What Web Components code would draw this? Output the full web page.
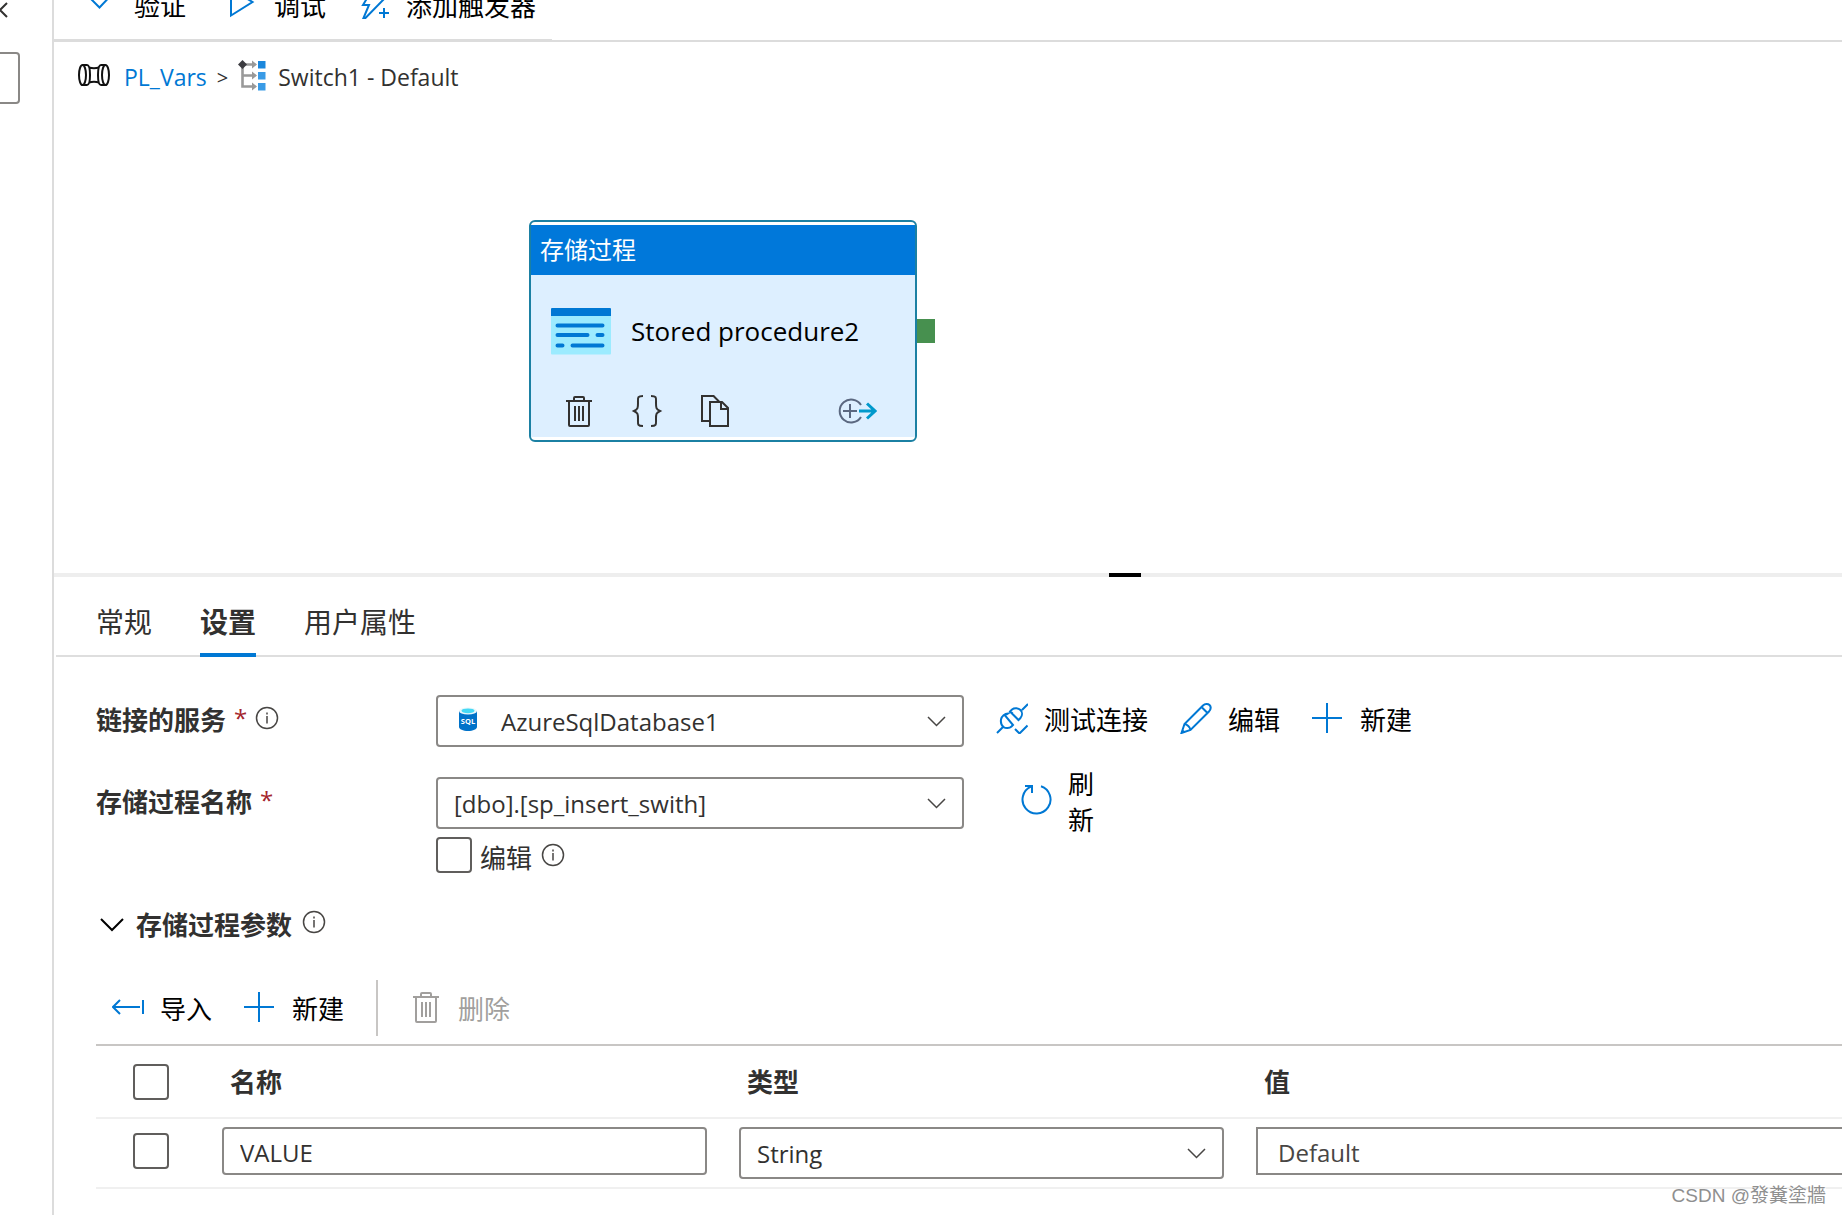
<!DOCTYPE html>
<html lang="zh-CN">
<head>
<meta charset="utf-8">
<title>PL_Vars</title>
<style>
html,body{margin:0;height:100%}
body{font-family:"Open Sans","Noto Sans CJK SC",sans-serif;font-size:26px;line-height:36px;color:#323130;background:#fff;overflow:hidden}
</style>
</head>
<body>
<studio-app></studio-app>
<script>
const ICONS = {
  check: ['0 0 32 32', '<path d="M5 11l8.500 8.500L22.500 10" stroke="#0078d4"/>'],
  play: ['0 0 32 32', '<path d="M5 1v26.500L26.500 14z" stroke="#0078d4"/>'],
  bolt: ['0 0 32 32', '<path d="M14 2L5 17h6L5.500 30h2L27 10h-8l4-8zM26 20v10M21 25h10" stroke="#0078d4"/>'],
  test: ['0 0 32 32', '<path d="M1 31l6-6M26 8l6-6M12 11.500c-3 0-6.500 2.500-7 6s.500 6 2.500 7.500 6 1.500 8-.500l1.500-1.500L9 13.500zM14 9.500l8.500 8.500 2-2c2-2.500 2-6 0-8s-6-2.500-8.500-.500zM17 12l-1.500-1.500M19 27l4.500 4.500 8-8" stroke="#0078d4"/>'],
  pencil: ['0 0 32 32', '<path d="M1.500 31l3-9L23 3.500c2-2 5-2 6.500-.500s1.500 4-.500 6.500L10.500 28zM4.500 22c2.500.500 5.500 3 6 6M21.500 5l6.500 6.500M2 28l2.500 2.500" stroke="#0078d4"/>'],
  plus: ['0 0 32 32', '<path d="M0 16h30M15 1v30" stroke="#0078d4"/>'],
  refresh: ['0 0 32 32', '<path d="M21 2.200A14 14 0 1 1 11 2.600M5 2h7v7" stroke="#0078d4"/>'],
  import: ['0 0 32 32', '<path d="M28 16H1M8 9l-7 7 7 7M31 9v14" stroke="#0078d4"/>'],
  trash: ['0 0 32 32', '<path d="M3 6h26M11 6V3q0-1 1-1h8q1 0 1 1v3M6 6v24q0 1 1 1h18q1 0 1-1V6M12 11v15M16 11v15M20 11v15" stroke="currentColor"/>'],
  braces: ['0 0 32 32', '<path d="M12 1C6 1 7 3 7 8s0 6-4 8c4 2 4 3 4 8s-1 7 5 7M20 1c6 0 5 2 5 7s0 6 4 8c-4 2-4 3-4 8s1 7-5 7" stroke="currentColor"/>'],
  copy: ['0 0 32 32', '<path d="M11 26H3V1h11.500l5 5M11 7h12l6 6v18H11zM22 7v7h7M14.500 1l6 6" stroke="currentColor"/>'],
  next: ['0 0 40 32', '<path d="M24 10A11.500 11.500 0 1 0 24 22M13 9v14M6 16h14" stroke="#5b6880"/><path d="M22 16h15M30 8.500l8 7.500-8 7.500" stroke="#0099cc" stroke-width="3"/>'],
  info: ['0 0 24 24', '<circle cx="12" cy="12" r="10.500" stroke="#484644" stroke-width="1.500"/><path d="M12 10v7.500M12 6.500v2" stroke="#484644" stroke-width="1.500"/>'],
  chevron: ['0 0 24 24', '<path d="M4 8l8.500 8.500L21 8" stroke="currentColor" stroke-width="1.500"/>'],
  section: ['0 0 24 24', '<path d="M1 6l11 11L23 6" stroke="#000"/>'],
  back: ['0 0 16 24', '<path d="M7 3L0 10l7 7" stroke="#323130"/>'],
  pipeline: ['0 0 32 24', '<g stroke="#111"><ellipse cx="4.500" cy="11" rx="3.500" ry="10"/><path d="M4.500 1H9c2 0 3 4 3 10s-1 10-3 10H4.500M11 3.500q5 1.500 10 0M11 18.500q5-1.500 10 0"/><path d="M27.500 1H23c-2 0-3 4-3 10s1 10 3 10h4.500"/><ellipse cx="27.500" cy="11" rx="3.500" ry="10"/></g>'],
  switch: ['0 0 28 32', '<path d="M4.500 5v21.500H15M4.500 15.500H15M4.500 4.500H15" stroke="#999" stroke-width="2.600"/><path d="M14 .500l5 4-5 4zM14 11.500l5 4-5 4zM14 22.500l5 4-5 4z" fill="#999"/><path d="M4.500 0L9 4.500 4.500 9 0 4.500z" fill="#3c3c41"/><path d="M20 1h7.500v7.500H20z" fill="#1b87dc"/><path d="M20 12h7.500v7.500H20zM20 23h7.500v7.500H20z" fill="#3a9be6"/>'],
  procedure: ['0 0 60 48', '<path d="M0 8h60v38.500q0 1-1 1H1q-1 0-1-1z" fill="#9cebff"/><path d="M0 9V2q0-1 1-1h58q1 0 1 1v7z" fill="#0078d4"/><path d="M6.500 18.500h45M6.500 28h30M46.500 28h5M6.500 38.500h5M21.500 38.500h30" stroke="#0078d4" stroke-width="4" stroke-linecap="round"/>'],
  sql: ['0 0 18 24', '<path d="M0 4v16c0 2 4 4 9 4s9-2 9-4V4z" fill="#0072c9"/><ellipse cx="9" cy="4" rx="9" ry="3.600" fill="#e8f7fb"/><ellipse cx="9" cy="3.800" rx="6.500" ry="2.400" fill="#45d9f5"/><text x="9" y="16.500" text-anchor="middle" font-family="Open Sans,sans-serif" font-weight="700" font-size="7.500" fill="#fff">SQL</text>']
};
const define = (tag, css, html) => customElements.define(tag, class extends HTMLElement {
  constructor() {
    super();
    this.attachShadow({ mode: 'open' });
  }
  connectedCallback() {
    this.shadowRoot.innerHTML = `<style>*{box-sizing:border-box}${css}</style>${typeof html === 'function' ? html(this) : html}`;
  }
});
const attr = (el, name, fallback = '') => el.getAttribute(name) ?? fallback;

define('ui-icon', ':host{display:inline-flex;flex:none}svg{display:block;fill:none;stroke-width:2}', el => {
  const [box, art] = ICONS[attr(el, 'name')];
  const [, , w, h] = box.split(' ');
  return `<svg viewBox="${box}" width="${w}" height="${h}" aria-hidden="true">${art}</svg>`;
});

define('tool-button', `:host{display:flex}
button{display:flex;align-items:center;gap:16px;padding:0;border:0;background:none;font:inherit;color:#000;text-align:left}
button:disabled{color:#a19f9d}
span{padding-top:4px}
:host([narrow]) span{width:26px}`,
el => `<button type="button" ${el.hasAttribute('disabled') ? 'disabled' : ''}><ui-icon name="${attr(el, 'icon')}"></ui-icon><span><slot></slot></span></button>`);

define('info-tip', ':host{display:inline-flex}button{display:flex;padding:0;border:0;background:none}',
  '<button type="button" aria-label="info"><ui-icon name="info"></ui-icon></button>');

const CHECK = 'input[type=checkbox]{appearance:none;display:block;flex:none;width:36px;height:36px;margin:0;border:2px solid #605e5c;border-radius:4px;background:#fff}';
const SELECT = `.pick{display:grid;align-items:center}
.pick>*{grid-area:1/1}
select{appearance:none;width:100%;height:52px;margin:0;padding:2px 56px 0 16px;border:2px solid #8a8886;border-radius:4px;background:#fff;font:inherit;font-size:24px;color:#323130}
.arrow{justify-self:end;margin-right:16px;color:#484644;pointer-events:none}`;

define('side-rail', `:host{display:flex;flex-direction:column;align-items:flex-start;width:54px;flex:none;border-right:2px solid #dcdcdc}
button{padding:0;border:0;background:none;margin-bottom:28px}
button,ui-icon{display:block}
input{width:20px;height:52px;padding:0;border:2px solid #8a8886;border-left:0;border-radius:0 4px 4px 0}`,
'<button type="button" aria-label="back"><ui-icon name="back"></ui-icon></button><input type="text" aria-label="filter">');

define('command-bar', `:host{display:block;height:42px;overflow:hidden;border-bottom:2px solid #dcdcdc}
nav{display:flex;width:fit-content;gap:32px;height:55px;margin-top:-15px;padding:0 16px 16px 32px;border-bottom:1px solid #dcdcdc}
.first{padding-right:8px}`,
`<nav><tool-button class="first" icon="check">验证</tool-button><tool-button icon="play">调试</tool-button><tool-button icon="bolt">添加触发器</tool-button></nav>`);

define('crumb-trail', `:host{display:flex;align-items:center;gap:10px;padding:16px 24px;font-size:23px}
a{color:#0078d4;text-decoration:none}
.sep{font-size:20px;padding-top:2px}
.crumb{display:flex;align-items:center;gap:12px}
a.crumb{gap:14px}
a ui-icon,.crumb ui-icon{padding-bottom:2px}`,
`<a class="crumb" href="#pipeline"><ui-icon name="pipeline"></ui-icon><span>PL_Vars</span></a><span class="sep">&gt;</span><span class="crumb"><ui-icon name="switch"></ui-icon><span>Switch1 - Default</span></span>`);

define('activity-node', `:host{display:block;position:relative;width:388px;padding:3px 0 3px;border:2px solid #1b80a3;border-radius:6px;background:#fff}
header{padding:7px 9px 7px;background:#0078da;color:#fff;font-size:24px}
.body{background:#ddefff;padding:32px 20px 10px}
.title{display:flex;align-items:center;gap:20px;font-size:26px;color:#000}
.acts{display:flex;gap:36px;margin-top:40px;padding:0 18px 0 12px;color:#323130}
button{display:flex;padding:0;border:0;background:none;color:inherit}
.last{margin-left:auto}
.port{position:absolute;left:100%;top:97px;width:18px;height:24px;background:#47904f;margin-left:2px}`,
`<header><slot name="type"></slot></header><div class="body"><div class="title"><ui-icon name="procedure"></ui-icon><slot></slot></div>
<div class="acts"><button type="button" aria-label="delete"><ui-icon name="trash"></ui-icon></button><button type="button" aria-label="code"><ui-icon name="braces"></ui-icon></button><button type="button" aria-label="copy"><ui-icon name="copy"></ui-icon></button><button type="button" class="last" aria-label="add output"><ui-icon name="next"></ui-icon></button></div></div><div class="port"></div>`);

define('pipeline-canvas', ':host{display:block;position:relative;height:531px}activity-node{position:absolute;left:475px;top:178px}',
'<crumb-trail></crumb-trail><activity-node><span slot="type">存储过程</span><span>Stored procedure2</span></activity-node>');

define('pane-splitter', ':host{display:flex;justify-content:center;height:4px;background:#eee}i{width:32px;background:#000;margin-left:354px}', '<i></i>');
define('tab-strip', `:host{display:flex;gap:48px;margin-left:2px;padding-left:40px;border-bottom:2px solid #dedede;font-size:28px}
button{margin:0 0 -2px;padding:27px 0 13px;border:0;border-bottom:4px solid transparent;background:none;font:inherit;color:inherit}
[aria-selected=true]{border-color:#0078d4;font-weight:700}`,
`<button type="button" role="tab" aria-selected="false">常规</button><button type="button" role="tab" aria-selected="true">设置</button><button type="button" role="tab" aria-selected="false">用户属性</button>`);

define('field-row', `:host{display:flex;align-items:flex-start}
.name{display:flex;align-items:center;width:340px;height:50px;flex:none;font-weight:700}
b{margin:0 8px 0 8px;color:#a4262c;font-weight:400;font-size:24px}
.name info-tip,.name b{margin-bottom:4px}
.control{width:528px;flex:none}
.lead{justify-self:start;margin-left:23px;margin-bottom:4px;pointer-events:none}
${SELECT}
.with-icon select{padding-left:63px}`,
el => `<div class="name"><label for="s">${attr(el, 'label')}</label><b>*</b>${el.hasAttribute('info') ? '<info-tip></info-tip>' : ''}</div>
<div class="control"><div class="pick ${attr(el, 'icon') ? 'with-icon' : ''}"><select id="s"><option>${attr(el, 'value')}</option></select>${attr(el, 'icon') ? `<ui-icon class="lead" name="${attr(el, 'icon')}"></ui-icon>` : ''}<ui-icon class="arrow" name="chevron"></ui-icon></div><slot></slot></div><slot name="actions"></slot>`);

define('check-field', `:host{display:flex;align-items:center;gap:8px;height:36px;margin-top:8px}label{padding-top:6px}info-tip{margin:0 0 0 1px}${CHECK}`,
'<input type="checkbox" id="c"><label for="c"><slot></slot></label><info-tip></info-tip>');

define('settings-form', `:host{display:flex;flex-direction:column;gap:30px;padding:38px 0 0 42px}
.actions{display:flex;gap:32px;margin-left:32px;height:45px}
.refresh{margin-left:56px;margin-top:-15px}`,
`<field-row label="链接的服务" value="AzureSqlDatabase1" icon="sql" info><div class="actions" slot="actions"><tool-button icon="test">测试连接</tool-button><tool-button icon="pencil">编辑</tool-button><tool-button icon="plus">新建</tool-button></div></field-row>
<field-row label="存储过程名称" value="[dbo].[sp_insert_swith]"><check-field>编辑</check-field><tool-button class="refresh" slot="actions" icon="refresh" narrow>刷新</tool-button></field-row>`);

define('param-table', `:host{display:block;overflow:hidden;border-top:2px solid #c8c6c4}
table{table-layout:fixed;border-spacing:0;width:100%;min-width:1900px}
th,td{padding:0 32px 0 0;border-bottom:2px solid #f0f0f0;text-align:left;vertical-align:top}
th{height:73px;vertical-align:middle;padding-left:8px;font-weight:700}
td{padding-top:8px;padding-bottom:8px}
th:first-child,td:first-child{padding-left:37px}
td:first-child{padding-top:14px}
.pickcol{width:126px}.col{width:517px}
input[type=text]{display:block;width:100%;height:48px;margin:0;padding:2px 16px 0;border:2px solid #8a8886;border-radius:4px;font:inherit;font-size:24px;color:#323130}
input.value{border-radius:0;padding-left:20px;color:#484644}
${SELECT}${CHECK}`,
`<table><colgroup><col class="pickcol"><col class="col"><col class="col"><col></colgroup>
<thead><tr><th><input type="checkbox" aria-label="select all"></th><th>名称</th><th>类型</th><th>值</th></tr></thead>
<tbody><tr><td><input type="checkbox" aria-label="select row"></td><td><input type="text" aria-label="名称" value="VALUE"></td><td><div class="pick"><select aria-label="类型"><option>String</option></select><ui-icon class="arrow" name="chevron"></ui-icon></div></td><td><input class="value" type="text" aria-label="值" value="Default"></td></tr></tbody></table>`);

define('param-section', `:host{display:block;padding:34px 0 0 42px}
h2{display:flex;align-items:center;gap:12px;margin:0;padding-left:4px;font-size:inherit;font-weight:700}
h2 button{display:flex;padding:0;border:0;background:none}
h2 info-tip{margin:0 0 6px -2px}
nav{display:flex;align-items:stretch;gap:32px;height:56px;margin:37px 0 8px;padding-left:16px}
nav tool-button{height:53px}
hr{width:2px;margin:0;border:0;background:#c8c6c4}`,
`<h2><button type="button" aria-label="toggle"><ui-icon name="section"></ui-icon></button><span>存储过程参数</span><info-tip></info-tip></h2>
<nav><tool-button icon="import">导入</tool-button><tool-button icon="plus">新建</tool-button><hr><tool-button icon="trash" disabled>删除</tool-button></nav><param-table></param-table>`);

define('page-mark', ':host{position:absolute;right:16px;bottom:6px;font:19px/26px "Liberation Sans","Noto Sans CJK TC",sans-serif;color:#8f8f8f;text-shadow:1px 1px 0 #fff}', '<slot></slot>');

define('studio-app', ':host{display:flex;position:relative;height:100vh;overflow:hidden}main{flex:1;min-width:0}',
'<side-rail></side-rail><main><command-bar></command-bar><pipeline-canvas></pipeline-canvas><pane-splitter></pane-splitter><tab-strip role="tablist"></tab-strip><settings-form></settings-form><param-section></param-section></main><page-mark>CSDN @發糞塗牆</page-mark>');
</script>
</body>
</html>
